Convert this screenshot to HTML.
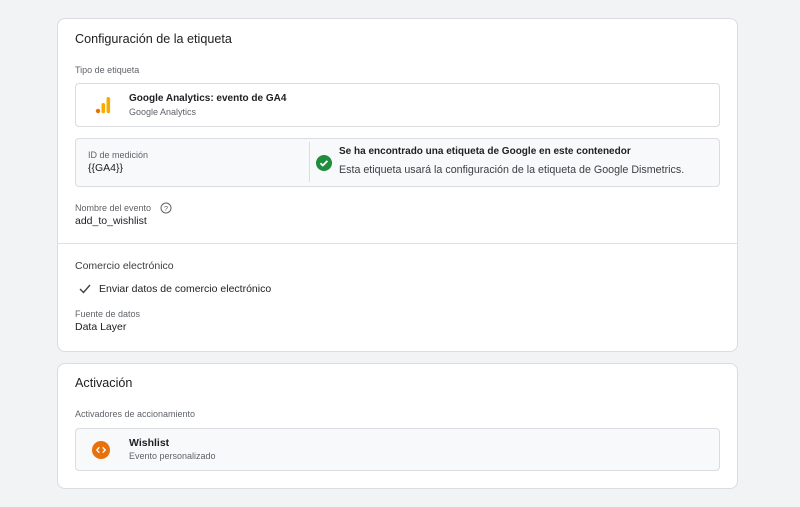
<!DOCTYPE html>
<html><head><meta charset="utf-8"><style>
*{margin:0;padding:0;box-sizing:border-box}
body{width:800px;height:507px;background:#f1f3f4;font-family:"Liberation Sans",Arial,sans-serif;color:#202124;position:relative;overflow:hidden}
.card{position:absolute;left:57px;width:681px;background:#fff;border:1px solid #dadce0;border-radius:8px}
.abs{position:absolute;white-space:nowrap}
.t{font-size:12.6px;color:#202124}
.lbl{font-size:9px;color:#5f6368}
.box{position:absolute;left:17px;width:645px;border:1px solid #dadce0;border-radius:4px}
</style></head><body>
<div class="card" style="top:18px;height:334px">
  <div class="abs t" style="left:17px;top:13px">Configuración de la etiqueta</div>
  <div class="abs lbl" style="left:17px;top:46px">Tipo de etiqueta</div>
  <div class="box" style="top:64px;height:44px;background:#fff">
    <svg class="abs" style="left:19px;top:12px" width="16" height="18" viewBox="0 0 16 18">
      <circle cx="3" cy="15" r="2.2" fill="#e37400"/>
      <rect x="6.5" y="7" width="3.6" height="10.2" rx="1.8" fill="#f9ab00"/>
      <rect x="11.5" y="1" width="3.6" height="16.2" rx="1.8" fill="#f9ab00"/>
    </svg>
    <div class="abs" style="left:53px;top:9px;font-size:10px;font-weight:bold;color:#202124">Google Analytics: evento de GA4</div>
    <div class="abs" style="left:53px;top:23px;font-size:9px;color:#5f6368">Google Analytics</div>
  </div>
  <div class="box" style="top:119px;height:49px;background:#f8f9fa">
    <div class="abs lbl" style="left:12px;top:11px">ID de medición</div>
    <div class="abs" style="left:12px;top:23px;font-size:10.5px">{{GA4}}</div>
    <div class="abs" style="left:233px;top:3px;width:1px;height:40px;background:#dadce0"></div>
    <svg class="abs" style="left:240px;top:16px" width="16" height="16" viewBox="0 0 16 16"><circle cx="8" cy="8" r="8" fill="#1e8e3e"/><path d="M4.5 8.2l2.3 2.3 4.6-4.6" stroke="#fff" stroke-width="1.8" fill="none"/></svg>
    <div class="abs" style="left:263px;top:7px;font-size:10px;font-weight:bold">Se ha encontrado una etiqueta de Google en este contenedor</div>
    <div class="abs" style="left:263px;top:25px;font-size:10.7px;color:#3c4043">Esta etiqueta usará la configuración de la etiqueta de Google Dismetrics.</div>
  </div>
  <div class="abs lbl" style="left:17px;top:184px">Nombre del evento</div>
  <svg class="abs" style="left:102px;top:183px" width="12" height="12" viewBox="0 0 12 12"><circle cx="6" cy="6" r="5" stroke="#5f6368" fill="none" stroke-width="1"/><text x="6" y="8.8" font-size="7.5" text-anchor="middle" fill="#5f6368" font-family="Liberation Sans">?</text></svg>
  <div class="abs" style="left:17px;top:196px;font-size:10.5px">add_to_wishlist</div>
  <div class="abs" style="left:0;top:224px;width:679px;height:1px;background:#e0e0e0"></div>
  <div class="abs" style="left:17px;top:241px;font-size:10.5px;color:#3c4043">Comercio electrónico</div>
  <svg class="abs" style="left:21px;top:265px" width="12" height="10" viewBox="0 0 12 10"><path d="M1 5l3.5 3.5L11 1" stroke="#3c4043" stroke-width="1.4" fill="none"/></svg>
  <div class="abs" style="left:41px;top:264px;font-size:10.5px">Enviar datos de comercio electrónico</div>
  <div class="abs lbl" style="left:17px;top:290px">Fuente de datos</div>
  <div class="abs" style="left:17px;top:302px;font-size:10.5px">Data Layer</div>
</div>
<div class="card" style="top:363px;height:126px">
  <div class="abs t" style="left:17px;top:12px">Activación</div>
  <div class="abs lbl" style="left:17px;top:45px">Activadores de accionamiento</div>
  <div class="box" style="top:64px;height:43px;background:#f8f9fa">
    <svg class="abs" style="left:16px;top:12px" width="18" height="18" viewBox="0 0 18 18"><circle cx="9" cy="9" r="9" fill="#e8710a"/><path d="M7.3 6.3L4.8 9l2.5 2.7M10.7 6.3L13.2 9l-2.5 2.7" stroke="#fff" stroke-width="1.4" fill="none"/></svg>
    <div class="abs" style="left:53px;top:8px;font-size:10.5px;font-weight:bold">Wishlist</div>
    <div class="abs" style="left:53px;top:22px;font-size:9px;color:#5f6368">Evento personalizado</div>
  </div>
</div>
</body></html>
